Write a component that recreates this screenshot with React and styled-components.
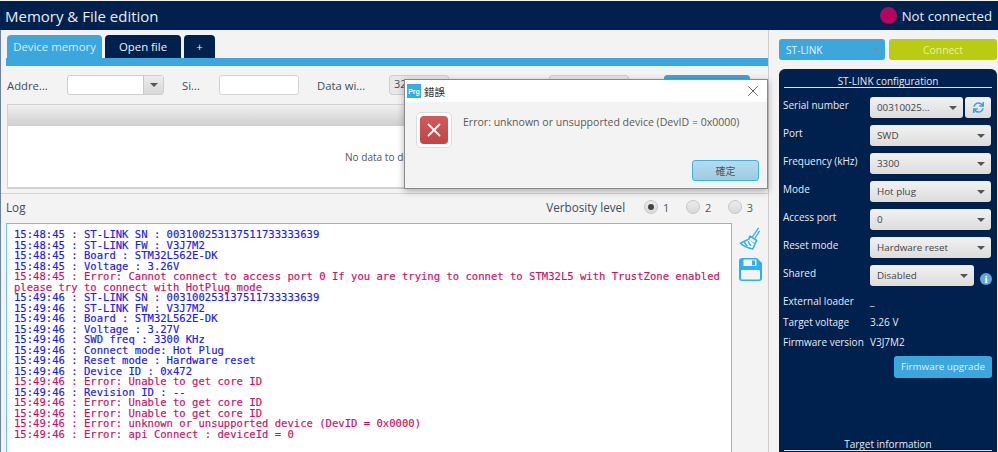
import { Fragment } from "react";
import styled, { createGlobalStyle } from "styled-components";
import { FaSync } from "react-icons/fa";
import { X } from "lucide-react";

const GlobalStyle = createGlobalStyle`
	html, body {
		margin: 0;
		padding: 0;
		background: #f3f3f3;
	}
	* {
		box-sizing: border-box;
	}
`;

const NAVY = "#00204e";
const BLUE = "#3ca7dc";
const UI_FONT = `"Open Sans", "Noto Sans", sans-serif`;

const Page = styled.div`
	position: relative;
	width: 998px;
	height: 452px;
	overflow: hidden;
	padding-top: 1px;
	display: flex;
	flex-direction: column;
	background: #f3f3f3;
	font-family: ${UI_FONT};
`;

const Header = styled.header`
	height: 29px;
	flex: none;
	display: flex;
	align-items: center;
	justify-content: space-between;
	padding: 0 6px 0 5px;
	background: ${NAVY};
	color: #e8edf3;
`;

const Title = styled.h1`
	margin: 0;
	font-size: 15px;
	font-weight: 400;
`;

const Status = styled.div`
	display: flex;
	align-items: center;
	gap: 5px;
	font-size: 13.2px;
`;

const StatusDot = styled.span`
	width: 17px;
	height: 17px;
	border-radius: 50%;
	background: #b4045c;
`;

const Body = styled.div`
	flex: 1;
	min-height: 0;
	display: flex;
`;

const LeftColumn = styled.main`
	width: 769px;
	flex: none;
	display: flex;
	flex-direction: column;
	border-left: 1px solid #6d829c;
	border-right: 1px solid #cfcfcf;
`;

const TabArea = styled.div`
	padding: 5px 0 0 5px;
`;

const TabRow = styled.div`
	display: flex;
	gap: 3px;
	padding-left: 1px;
`;

const Tab = styled.div`
	height: 23px;
	width: ${(p) => p.$width}px;
	display: flex;
	align-items: center;
	justify-content: center;
	border-radius: 4px 4px 0 0;
	font-size: 11.4px;
	color: ${(p) => (p.$active ? "#d3ecf8" : "#eef2f6")};
	background: ${(p) => (p.$active ? BLUE : NAVY)};
`;

const TabBar = styled.div`
	height: 8px;
	background: ${BLUE};
`;

const Toolbar = styled.div`
	height: 38px;
	display: flex;
	align-items: center;
	padding: 0 0 0 6px;
	font-size: 11.3px;
	color: #3f4d5e;
`;

const ToolLabel = styled.span`
	width: ${(p) => p.$width}px;
	flex: none;
`;

const Combo = styled.div`
	width: 97px;
	height: 20px;
	margin-right: 18px;
	flex: none;
	display: flex;
	border: 1px solid #cfcfcf;
	border-radius: 3px;
	background: #fff;
`;

const ComboArrow = styled.div`
	width: 20px;
	margin-left: auto;
	display: flex;
	align-items: center;
	justify-content: center;
	background: linear-gradient(#ececec, #d8d8d8);
	border-left: 1px solid #c8c8c8;
`;

const Caret = styled.span`
	width: 0;
	height: 0;
	border-left: 4px solid transparent;
	border-right: 4px solid transparent;
	border-top: 4px solid ${(p) => p.$color || "#555"};
`;

const ToolInput = styled.div`
	width: 80px;
	height: 20px;
	margin-right: 18px;
	flex: none;
	border: 1px solid #d4d4d4;
	border-radius: 3px;
	background: #fff;
`;

const ToolButton = styled.div`
	width: ${(p) => p.$width}px;
	height: 20px;
	margin-right: ${(p) => p.$gap}px;
	flex: none;
	padding-left: 4px;
	font-size: 11px;
	border: 1px solid ${(p) => (p.$primary ? BLUE : "#cfcfcf")};
	border-radius: 3px;
	background: ${(p) => (p.$primary ? BLUE : "#e8e8e8")};
`;

const Table = styled.section`
	height: 85px;
	flex: none;
	margin-left: 6px;
	display: flex;
	flex-direction: column;
	border: 1px solid #d2d2d2;
	border-bottom: 2px solid #d2d2d2;
	background: #fff;
`;

const TableHead = styled.div`
	height: 21px;
	flex: none;
	background: linear-gradient(#f0f0f0, #cfcfcf);
`;

const TableEmpty = styled.div`
	flex: 1;
	display: flex;
	align-items: center;
	justify-content: center;
	font-size: 10.1px;
	color: #555;
`;

const Splitter = styled.div`
	height: 5px;
	flex: none;
	border-bottom: 1px solid #d6d6d6;
`;

const LogHead = styled.div`
	height: 29px;
	flex: none;
	display: flex;
	align-items: center;
	justify-content: space-between;
	padding: 0 15px 3px 5px;
	font-size: 11.7px;
	color: #3f4d5e;
`;

const Verbosity = styled.div`
	display: flex;
	align-items: center;
`;

const VerbosityLabel = styled.span`
	margin-right: 19px;
`;

const RadioItem = styled.label`
	display: flex;
	align-items: center;
	gap: 5px;
	margin-left: ${(p) => (p.$first ? 0 : 16.5)}px;
	font-size: 11px;
	color: #555;
`;

const RadioCircle = styled.span`
	width: 14px;
	height: 14px;
	display: flex;
	align-items: center;
	justify-content: center;
	border: 1px solid #c6c6c6;
	border-radius: 50%;
	background: linear-gradient(#ececec, #d9d9d9);

	&::after {
		content: "";
		width: 6px;
		height: 6px;
		border-radius: 50%;
		background: ${(p) => (p.$on ? "#444" : "transparent")};
	}
`;

const LogRow = styled.div`
	flex: 1;
	min-height: 0;
	display: flex;
	padding-left: 5px;
`;

const LogBox = styled.pre`
	width: 726px;
	flex: none;
	margin: 0;
	padding: 5px 7px 0;
	overflow: hidden;
	background: #fff;
	border: 1px solid #6cc3ea;
	border-bottom: none;
	font-family: "DejaVu Sans Mono", "Liberation Mono", monospace;
	font-size: 10.57px;
	line-height: 10.5px;
	-webkit-text-stroke: 0.15px;
`;

const LogLine = styled.div`
	height: 10.5px;
	white-space: pre;
	color: ${(p) => (p.$error ? "#c8106a" : "#2020e0")};
`;

const LogTools = styled.div`
	flex: 1;
	display: flex;
	flex-direction: column;
	align-items: center;
	gap: 8px;
	padding-top: 4px;
`;

const SideColumn = styled.aside`
	flex: 1;
	min-width: 0;
	display: flex;
	flex-direction: column;
	padding: 9px 1px 0 10px;
`;

const ConnectRow = styled.div`
	display: flex;
	gap: 4px;
	height: 21px;
	flex: none;
`;

const ProbeSelect = styled.div`
	width: 106px;
	display: flex;
	align-items: center;
	justify-content: space-between;
	padding: 0 5px 0 7px;
	border-radius: 3px;
	background: ${BLUE};
	color: #e4f3fb;
	font-size: 10.2px;
`;

const ConnectButton = styled.div`
	flex: 1;
	display: flex;
	align-items: center;
	justify-content: center;
	border-radius: 3px;
	background: #b9cc12;
	color: #e8f0a0;
	font-size: 10.4px;
`;

const ConfigPanel = styled.section`
	flex: 1;
	min-height: 0;
	margin-top: 9px;
	padding: 0 5px 0 4px;
	display: flex;
	flex-direction: column;
	border-radius: 6px 6px 0 0;
	background: ${NAVY};
	color: #e6ebf1;
	font-size: 10px;
`;

const PanelTitle = styled.div`
	height: 19px;
	flex: none;
	margin-left: 1px;
	display: flex;
	align-items: flex-end;
	justify-content: center;
	line-height: 12px;
	border-bottom: 1px solid #dfe5ec;
`;

const FieldList = styled.div`
	margin-top: 9px;
	display: grid;
	grid-template-columns: 87px 121px;
	grid-auto-rows: 21px;
	row-gap: 7px;
`;

const FieldLabel = styled.span`
	line-height: 13px;
	padding-top: 2px;
`;

const FieldControls = styled.div`
	display: flex;
	align-items: center;
	gap: 2px;
`;

const Select = styled.div`
	flex: ${(p) => (p.$fixed ? "none" : 1)};
	width: ${(p) => (p.$fixed ? `${p.$fixed}px` : "auto")};
	height: 21px;
	display: flex;
	align-items: center;
	justify-content: space-between;
	padding: 0 6px 0 7px;
	border-radius: 3px;
	background: linear-gradient(#f2f2f2, #dcdcdc);
	color: #444;
	font-size: 9.8px;
`;

const RefreshButton = styled.div`
	width: 26px;
	height: 21px;
	flex: none;
	display: flex;
	align-items: center;
	justify-content: center;
	border-radius: 3px;
	background: linear-gradient(#f2f2f2, #dcdcdc);
	color: #3c9fd8;
	font-size: 11px;
`;

const InfoBadge = styled.span`
	width: 12px;
	height: 12px;
	margin: 6px 0 0 4px;
	flex: none;
	display: flex;
	align-items: center;
	justify-content: center;
	border-radius: 50%;
	background: #5fa8e0;
	color: #fff;
	font-family: "Liberation Serif", serif;
	font-weight: 700;
	font-size: 11px;
`;

const InfoList = styled.div`
	margin-top: 8px;
	display: grid;
	grid-template-columns: 87px 1fr;
	grid-auto-rows: 20.5px;
`;

const UpgradeRow = styled.div`
	display: flex;
	justify-content: flex-end;
`;

const UpgradeButton = styled.div`
	width: 98px;
	height: 22px;
	display: flex;
	align-items: center;
	justify-content: center;
	border-radius: 3px;
	background: ${BLUE};
	color: #dff1fa;
	font-size: 9.8px;
`;

const TargetTitle = styled(PanelTitle)`
	margin-top: auto;
	margin-bottom: 1px;
	height: 18px;
`;

const Dialog = styled.div`
	position: absolute;
	left: 404px;
	top: 79px;
	width: 364px;
	height: 110px;
	display: flex;
	flex-direction: column;
	background: #f3f3f3;
	border: 1px solid #8a8a8a;
	box-shadow: 0 2px 7px rgba(0, 0, 0, 0.3);
`;

const DialogTitleBar = styled.div`
	height: 22px;
	flex: none;
	display: flex;
	align-items: center;
	padding: 0 5px 0 2px;
	background: #fff;
	color: #333;
	font-family: "Open Sans", "Noto Sans CJK TC", sans-serif;
	font-size: 10.5px;
`;

const AppIcon = styled.span`
	width: 14px;
	height: 14px;
	margin-right: 3px;
	display: flex;
	align-items: center;
	justify-content: center;
	background: #35ade6;
	color: #fff;
	font-family: "Liberation Sans", sans-serif;
	font-size: 7px;
	font-weight: 700;
`;

const CloseIcon = styled(X)`
	margin-left: auto;
	color: #333;
`;

const DialogBody = styled.div`
	flex: 1;
	display: flex;
	align-items: flex-start;
	padding: 10px 8px 0 11px;
	gap: 11px;
	color: #5a5a5a;
	font-size: 10.55px;
`;

const ErrorFrame = styled.div`
	width: 36px;
	height: 36px;
	flex: none;
	padding: 3px;
	border: 1px solid #ddd;
	border-radius: 5px;
	background: #fff;
`;

const ErrorIcon = styled.div`
	width: 100%;
	height: 100%;
	display: flex;
	align-items: center;
	justify-content: center;
	border-radius: 4px;
	background: linear-gradient(#d25a5a, #c04545);
	color: #fff;
`;

const DialogMessage = styled.p`
	margin: 3px 0 0;
	white-space: nowrap;
`;

const DialogFooter = styled.div`
	display: flex;
	justify-content: flex-end;
	padding: 0 8px 7px 0;
`;

const OkButton = styled.div`
	width: 67px;
	height: 21px;
	display: flex;
	align-items: center;
	justify-content: center;
	border: 1px solid #3db2e4;
	border-radius: 3px;
	background: linear-gradient(#b6dcee, #9ccce2);
	color: #4a5560;
	font-family: "Noto Sans CJK TC", sans-serif;
	font-size: 10px;
`;

const logLines = [
	["15:48:45 : ST-LINK SN : 003100253137511733333639"],
	["15:48:45 : ST-LINK FW : V3J7M2"],
	["15:48:45 : Board : STM32L562E-DK"],
	["15:48:45 : Voltage : 3.26V"],
	["15:48:45 : Error: Cannot connect to access port 0 If you are trying to connet to STM32L5 with TrustZone enabled", true],
	["please try to connect with HotPlug mode", true],
	["15:49:46 : ST-LINK SN : 003100253137511733333639"],
	["15:49:46 : ST-LINK FW : V3J7M2"],
	["15:49:46 : Board : STM32L562E-DK"],
	["15:49:46 : Voltage : 3.27V"],
	["15:49:46 : SWD freq : 3300 KHz"],
	["15:49:46 : Connect mode: Hot Plug"],
	["15:49:46 : Reset mode : Hardware reset"],
	["15:49:46 : Device ID : 0x472"],
	["15:49:46 : Error: Unable to get core ID", true],
	["15:49:46 : Revision ID : --"],
	["15:49:46 : Error: Unable to get core ID", true],
	["15:49:46 : Error: Unable to get core ID", true],
	["15:49:46 : Error: unknown or unsupported device (DevID = 0x0000)", true],
	["15:49:46 : Error: api Connect : deviceId = 0", true],
];

const fields = [
	["Port", "SWD"],
	["Frequency (kHz)", "3300"],
	["Mode", "Hot plug"],
	["Access port", "0"],
	["Reset mode", "Hardware reset"],
];

const BroomIcon = () => (
	<svg width="22" height="23" viewBox="0 0 22 24" fill="none" stroke="#2fb0ee" strokeWidth="1.6" strokeLinejoin="round">
		<path d="M13 11 L20 1" strokeWidth="1.4" />
		<path d="M16 12 L21 4" strokeWidth="1.4" />
		<path d="M11 9.5 L18 14 L16 18 L9 14 Z" />
		<path d="M9 13 L1 17 C4 20 9 22 14 23 L16 18" fill="#ffffff" />
		<path d="M5 16 L8 20 M9 15 L12 20" />
	</svg>
);

const SaveIcon = () => (
	<svg width="23" height="23" viewBox="0 0 23 23">
		<path d="M3 0 H18 L23 5 V20 a3 3 0 0 1 -3 3 H3 a3 3 0 0 1 -3 -3 V3 a3 3 0 0 1 3 -3 Z" fill="#2fb0ee" />
		<rect x="4.5" y="1.5" width="13" height="6.5" fill="#f3f3f3" />
		<rect x="13" y="2.5" width="3" height="4.5" fill="#2fb0ee" />
		<rect x="2" y="12" width="19" height="9.5" rx="1" fill="#f3f3f3" />
	</svg>
);

const App = () => {
	return (
		<>
			<GlobalStyle />
			<Page>
				<Header>
					<Title>Memory &amp; File edition</Title>
					<Status>
						<StatusDot />
						Not connected
					</Status>
				</Header>
				<Body>
					<LeftColumn>
						<TabArea>
							<TabRow>
								<Tab $active $width={95}>Device memory</Tab>
								<Tab $width={76}>Open file</Tab>
								<Tab $width={31}>+</Tab>
							</TabRow>
							<TabBar />
						</TabArea>
						<Toolbar>
							<ToolLabel $width={60}>Addre...</ToolLabel>
							<Combo>
								<ComboArrow><Caret /></ComboArrow>
							</Combo>
							<ToolLabel $width={37}>Si...</ToolLabel>
							<ToolInput />
							<ToolLabel $width={72}>Data wi...</ToolLabel>
							<ToolButton $width={60} $gap={100}>32</ToolButton>
							<ToolButton $width={80} $gap={35} />
							<ToolButton $width={86} $gap={0} $primary />
						</Toolbar>
						<Table>
							<TableHead />
							<TableEmpty>No data to display</TableEmpty>
						</Table>
						<Splitter />
						<LogHead>
							Log
							<Verbosity>
								<VerbosityLabel>Verbosity level</VerbosityLabel>
								<RadioItem $first><RadioCircle $on />1</RadioItem>
								<RadioItem><RadioCircle />2</RadioItem>
								<RadioItem><RadioCircle />3</RadioItem>
							</Verbosity>
						</LogHead>
						<LogRow>
							<LogBox>
								{logLines.map(([text, isError], i) => (
									<LogLine key={i} $error={isError}>{text}</LogLine>
								))}
							</LogBox>
							<LogTools>
								<BroomIcon />
								<SaveIcon />
							</LogTools>
						</LogRow>
					</LeftColumn>
					<SideColumn>
						<ConnectRow>
							<ProbeSelect>
								ST-LINK
								<Caret $color="#6c93ad" />
							</ProbeSelect>
							<ConnectButton>Connect</ConnectButton>
						</ConnectRow>
						<ConfigPanel>
							<PanelTitle>ST-LINK configuration</PanelTitle>
							<FieldList>
								<FieldLabel>Serial number</FieldLabel>
								<FieldControls>
									<Select>
										00310025...
										<Caret />
									</Select>
									<RefreshButton><FaSync /></RefreshButton>
								</FieldControls>
								{fields.map(([label, value]) => (
									<Fragment key={label}>
										<FieldLabel>{label}</FieldLabel>
										<FieldControls>
											<Select>
												{value}
												<Caret />
											</Select>
										</FieldControls>
									</Fragment>
								))}
								<FieldLabel>Shared</FieldLabel>
								<FieldControls>
									<Select $fixed={104}>
										Disabled
										<Caret />
									</Select>
									<InfoBadge>i</InfoBadge>
								</FieldControls>
							</FieldList>
							<InfoList>
								<span>External loader</span>
								<span>_</span>
								<span>Target voltage</span>
								<span>3.26 V</span>
								<span>Firmware version</span>
								<span>V3J7M2</span>
							</InfoList>
							<UpgradeRow>
								<UpgradeButton>Firmware upgrade</UpgradeButton>
							</UpgradeRow>
							<TargetTitle>Target information</TargetTitle>
						</ConfigPanel>
					</SideColumn>
				</Body>
				<Dialog>
					<DialogTitleBar>
						<AppIcon>Prg</AppIcon>
						錯誤
						<CloseIcon size={18} strokeWidth={1} />
					</DialogTitleBar>
					<DialogBody>
						<ErrorFrame>
							<ErrorIcon><X size={22} strokeWidth={2} /></ErrorIcon>
						</ErrorFrame>
						<DialogMessage>Error: unknown or unsupported device (DevID = 0x0000)</DialogMessage>
					</DialogBody>
					<DialogFooter>
						<OkButton>確定</OkButton>
					</DialogFooter>
				</Dialog>
			</Page>
		</>
	);
};

export default App;
